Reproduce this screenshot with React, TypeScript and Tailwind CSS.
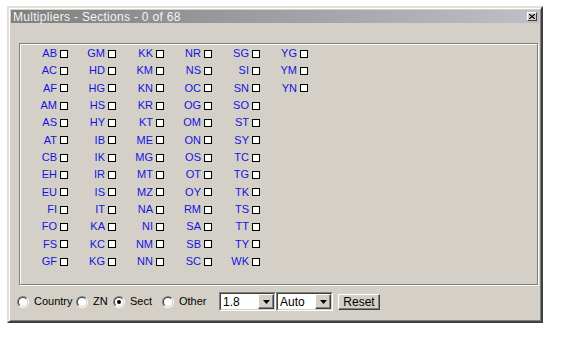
import React from "react";

const columns: string[][] = [
  ["AB", "AC", "AF", "AM", "AS", "AT", "CB", "EH", "EU", "FI", "FO", "FS", "GF"],
  ["GM", "HD", "HG", "HS", "HY", "IB", "IK", "IR", "IS", "IT", "KA", "KC", "KG"],
  ["KK", "KM", "KN", "KR", "KT", "ME", "MG", "MT", "MZ", "NA", "NI", "NM", "NN"],
  ["NR", "NS", "OC", "OG", "OM", "ON", "OS", "OT", "OY", "RM", "SA", "SB", "SC"],
  ["SG", "SI", "SN", "SO", "ST", "SY", "TC", "TG", "TK", "TS", "TT", "TY", "WK"],
  ["YG", "YM", "YN"],
];

function Radio({ label, checked, width }: { label: string; checked?: boolean; width: string }) {
  return (
    <div className={`flex items-center gap-[5px] ${width}`}>
      <div className="flex h-[12px] w-[12px] shrink-0 rounded-full border border-b-white border-l-[#808080] border-r-white border-t-[#808080]">
        <div className="flex flex-1 items-center justify-center rounded-full border border-b-[#d4d0c8] border-l-[#404040] border-r-[#d4d0c8] border-t-[#404040] bg-white">
          {checked && <div className="h-[4px] w-[4px] rounded-full bg-black" />}
        </div>
      </div>
      <span className="leading-none text-black">{label}</span>
    </div>
  );
}

function Combo({ value }: { value: string }) {
  return (
    <div className="flex h-[19px] w-[57px] border border-b-white border-l-[#808080] border-r-white border-t-[#808080]">
      <div className="flex flex-1 items-center border border-b-[#d4d0c8] border-l-[#404040] border-r-[#d4d0c8] border-t-[#404040] bg-white">
        <span className="flex-1 pl-[2px] text-[12px] leading-none text-black">{value}</span>
        <div className="flex h-full w-[16px] items-center justify-center border border-b-[#404040] border-l-white border-r-[#404040] border-t-white bg-[#d4d0c8] shadow-[inset_-1px_-1px_0_#808080]">
          <svg width="7" height="4" viewBox="0 0 7 4">
            <path d="M0 0h7L3.5 4z" fill="#000" />
          </svg>
        </div>
      </div>
    </div>
  );
}

export default function App() {
  return (
    <div className="min-h-[342px] w-[564px] bg-white pl-[7px] pt-[6px] font-['Liberation_Sans',Arial,sans-serif]">
      <div className="flex h-[317px] w-[536px] flex-col border-2 border-b-[#404040] border-l-[#e4e0d8] border-r-[#404040] border-t-[#e4e0d8] bg-[#d4d0c8] shadow-[inset_1px_1px_0_#fff,inset_-1px_-1px_0_#808080]">
        {/* Title bar (inactive) */}
        <div className="mx-[2px] mt-[2px] flex h-[13px] items-center justify-between bg-gradient-to-r from-[#808080] to-[#c0bec8] pl-[2px] pr-[2px]">
          <span className="text-[12px] leading-none tracking-[0.3px] text-[#f4f4f4]">Multipliers - Sections - 0 of 68</span>
          <button className="flex h-[9px] w-[10px] items-center justify-center border border-b-[#404040] border-l-white border-r-[#404040] border-t-white bg-[#d4d0c8]">
            <svg width="6" height="5" viewBox="0 0 6 5">
              <path d="M0 0L6 5M6 0L0 5" stroke="#000" strokeWidth="1.2" />
            </svg>
          </button>
        </div>

        {/* Group box */}
        <div className="ml-[10px] mt-[20px] h-[242px] w-[519px] border border-[#808080] pt-[1px] shadow-[inset_1px_1px_0_#fff,1px_1px_0_#fff]">
          <div className="grid grid-flow-col grid-cols-[repeat(6,48px)] grid-rows-[repeat(13,17.33px)]">
            {columns.flatMap((col) =>
              col.map((code) => (
                <div key={code} className="flex items-center justify-end gap-[3px]">
                  <span className="text-[11px] leading-none text-[#1414e0]">{code}</span>
                  <div className="h-[8px] w-[8px] border border-black bg-white" />
                </div>
              )),
            )}
          </div>
        </div>

        {/* Bottom controls */}
        <div className="ml-[8px] mt-[7px] flex h-[19px] items-center text-[11px]">
          <Radio label="Country" width="w-[59px]" />
          <Radio label="ZN" width="w-[37px]" />
          <Radio label="Sect" checked width="w-[49px]" />
          <Radio label="Other" width="w-[57px]" />
          <Combo value="1.8" />
          <Combo value="Auto" />
          <button className="ml-[5px] flex h-[16px] w-[42px] items-center justify-center border border-b-[#404040] border-l-white border-r-[#404040] border-t-white bg-[#d4d0c8] text-[12px] leading-none text-black shadow-[inset_-1px_-1px_0_#808080]">
            Reset
          </button>
        </div>
      </div>
    </div>
  );
}
